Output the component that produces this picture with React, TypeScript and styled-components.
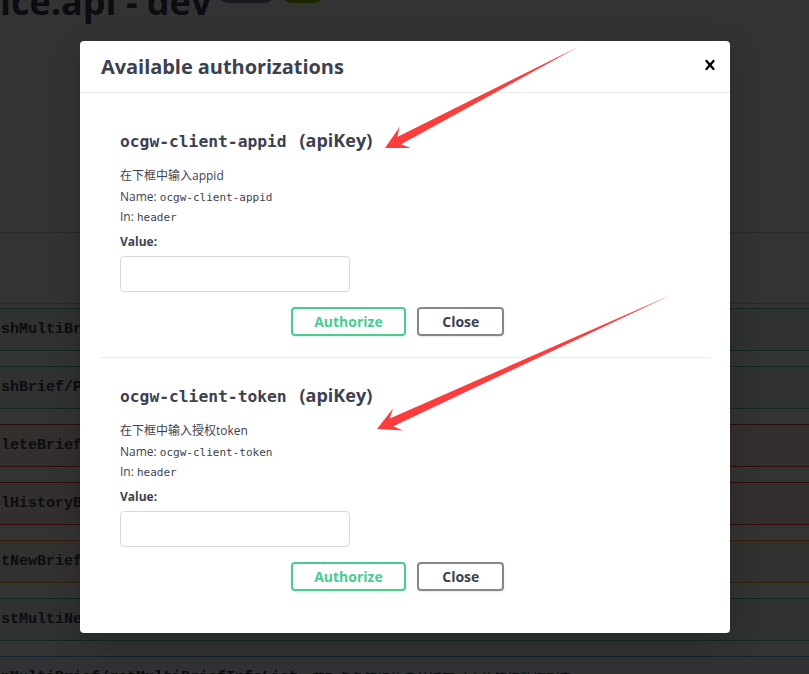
import styled, { createGlobalStyle } from "styled-components";

const GlobalStyle = createGlobalStyle`
  html, body {
    margin: 0;
    padding: 0;
    background: #fff;
  }
  body {
    font-family: "Open Sans", "Noto Sans CJK SC", sans-serif;
  }
  * {
    box-sizing: border-box;
  }
`;

type Tone = "post" | "delete" | "put" | "get";

const toneColors: Record<Tone, { border: string; bg: string }> = {
  post: { border: "#49cc90", bg: "rgba(73,204,144,.1)" },
  delete: { border: "#f93e3e", bg: "rgba(249,62,62,.1)" },
  put: { border: "#fca130", bg: "rgba(252,161,48,.1)" },
  get: { border: "#61affe", bg: "rgba(97,175,254,.1)" },
};

const ops: { path: string; tone: Tone; summary?: string }[] = [
  { path: "shMultiBrief/pushMultiBriefInfo", tone: "post" },
  { path: "shBrief/PushBriefInfo", tone: "post" },
  { path: "leteBrief/deleteBriefInfo", tone: "delete" },
  { path: "lHistoryBrief/delAllHistoryBrief", tone: "delete" },
  { path: "tNewBrief/putNewBriefInfo", tone: "put" },
  { path: "stMultiNews/postMultiNewsInfo", tone: "post" },
  {
    path: "nMultiBrief/getMultiBriefInfoList",
    tone: "get",
    summary: "获取多条简报信息并返回对应的简报数据列表",
  },
];

const auths = [
  { name: "ocgw-client-appid", desc: "在下框中输入appid" },
  { name: "ocgw-client-token", desc: "在下框中输入授权token" },
];

// arrow polygon: thin tail, notched head
const arrowPoints = (tx: number, ty: number, px: number, py: number) => {
  const dx = px - tx;
  const dy = py - ty;
  const len = Math.hypot(dx, dy);
  const ux = dx / len;
  const uy = dy / len;
  const nx = -uy;
  const ny = ux;
  const L = 23;
  const W = 12;
  const notch = 16;
  const w = 4.2;
  const bx = px - ux * L;
  const by = py - uy * L;
  const cx = px - ux * notch;
  const cy = py - uy * notch;
  const pts = [
    [tx, ty],
    [cx + nx * w, cy + ny * w],
    [bx + nx * W, by + ny * W],
    [px, py],
    [bx - nx * W, by - ny * W],
    [cx - nx * w, cy - ny * w],
  ];
  return pts.map((p) => p.map((v) => v.toFixed(1)).join(",")).join(" ");
};

const App = () => {
  return (
    <Screen>
      <GlobalStyle />
      <Page>
        <InfoTitle>
          ice.api - dev
          <Badge $color="#7d8492" $w={55}>1.0.0</Badge>
          <Badge $color="#89bf04" $w={42}>OAS3</Badge>
        </InfoTitle>
        <SchemeArea />
        <TagHeader />
        <OpList>
          {ops.map((op) => (
            <OpRow key={op.path} $tone={op.tone}>
              <OpPath>{op.path}</OpPath>
              {op.summary && <OpSummary>{op.summary}</OpSummary>}
            </OpRow>
          ))}
        </OpList>
      </Page>

      <Backdrop>
        <Modal>
          <ModalHeader>
            <ModalTitle>Available authorizations</ModalTitle>
            <CloseModal aria-label="close">
              <svg width="20" height="20" viewBox="0 0 20 20">
                <path
                  fill="#000"
                  d="M14.348 14.849c-.469.469-1.229.469-1.697 0L10 11.819l-2.651 3.029c-.469.469-1.229.469-1.697 0-.469-.469-.469-1.229 0-1.697l2.758-3.15-2.759-3.152c-.469-.469-.469-1.228 0-1.697.469-.469 1.228-.469 1.697 0L10 8.183l2.651-3.031c.469-.469 1.228-.469 1.697 0 .469.469.469 1.229 0 1.697l-2.758 3.152 2.758 3.15c.469.469.469 1.229 0 1.698z"
                />
              </svg>
            </CloseModal>
          </ModalHeader>
          <ModalContent>
            {auths.map((a, i) => (
              <AuthContainer key={a.name} $last={i === auths.length - 1}>
                <AuthTitle>
                  <code>{a.name} </code>(apiKey)
                </AuthTitle>
                <Desc>{a.desc}</Desc>
                <InfoLine>
                  Name: <code>{a.name}</code>
                </InfoLine>
                <InfoLine>
                  In: <code>header</code>
                </InfoLine>
                <ValueLabel>Value:</ValueLabel>
                <ValueInput type="text" />
                <BtnRow>
                  <ModalBtn $color="#49cc90" $text="#49cc90" $pad={21.5}>
                    Authorize
                  </ModalBtn>
                  <ModalBtn $color="#888" $text="#3b4151" $pad={23}>
                    Close
                  </ModalBtn>
                </BtnRow>
              </AuthContainer>
            ))}
          </ModalContent>
        </Modal>
      </Backdrop>

      <Annotations width="809" height="674" viewBox="0 0 809 674">
        <polygon fill="#fd3d3d" points={arrowPoints(578, 47, 385, 148)} />
        <polygon fill="#fd3d3d" points={arrowPoints(671, 295, 377, 429)} />
      </Annotations>
    </Screen>
  );
};

const Screen = styled.div`
  position: relative;
  width: 809px;
  height: 674px;
  overflow: hidden;
`;

const Page = styled.div`
  background: #fff;
  height: 674px;
`;

const InfoTitle = styled.h2`
  margin: -16px 0 0 0;
  padding-left: 0;
  font: 700 36px/36px "Open Sans", sans-serif;
  color: #3b4151;
  white-space: nowrap;
`;

const Badge = styled.small<{ $color: string; $w: number }>`
  display: inline-block;
  vertical-align: top;
  width: ${(p) => p.$w}px;
  margin-left: 8px;
  height: 19px;
  border-radius: 57px;
  background: ${(p) => p.$color};
  color: #fff;
  text-align: center;
  font: 700 10px/19px "Open Sans", sans-serif;
`;

const SchemeArea = styled.div`
  height: 213px;
  border-bottom: 1px solid rgba(59, 65, 81, 0.3);
`;

const TagHeader = styled.div`
  height: 71px;
  border-bottom: 1px solid rgba(59, 65, 81, 0.3);
`;

const OpList = styled.div`
  padding-top: 4px;
`;

const OpRow = styled.div<{ $tone: Tone }>`
  display: flex;
  align-items: center;
  height: 43px;
  margin: 0 -10px 15px;
  padding-left: 10px;
  border: 1px solid ${(p) => toneColors[p.$tone].border};
  border-radius: 4px;
  background: ${(p) => toneColors[p.$tone].bg};
  white-space: nowrap;
`;

const OpPath = styled.span`
  font: 700 15px "Liberation Mono", monospace;
  color: #3b4151;
`;

const OpSummary = styled.span`
  margin-left: 14px;
  font: 13px "Noto Sans CJK SC", sans-serif;
  color: #3b4151;
`;

const Backdrop = styled.div`
  position: absolute;
  inset: 0;
  background: rgba(0, 0, 0, 0.8);
  padding: 41px 0 0 80px;
`;

const Modal = styled.div`
  width: 650px;
  height: 592px;
  background: #fff;
  border-radius: 4px;
  box-shadow: 0 10px 30px 0 rgba(0, 0, 0, 0.2);
  display: flex;
  flex-direction: column;
`;

const ModalHeader = styled.div`
  height: 52px;
  flex-shrink: 0;
  display: flex;
  align-items: center;
  justify-content: space-between;
  padding: 0 10px 0 21px;
  border-bottom: 1px solid #ebebeb;
`;

const ModalTitle = styled.h3`
  margin: 0;
  font: 700 20px "Open Sans", sans-serif;
  letter-spacing: -0.05px;
  color: #3b4151;
`;

const CloseModal = styled.button`
  display: flex;
  padding: 0;
  margin-top: -3px;
  background: none;
  border: none;
`;

const ModalContent = styled.div`
  padding: 10px 20px 0;
`;

const AuthContainer = styled.div<{ $last?: boolean }>`
  padding: 26px 20px 21px;
  border-bottom: ${(p) => (p.$last ? "none" : "1px solid #ebebeb")};
  color: #3b4151;
  code {
    font-family: "DejaVu Sans Mono", monospace;
    line-height: 1;
  }
`;

const AuthTitle = styled.h4`
  margin: -1px 0 0;
  height: 24px;
  overflow: visible;
  white-space: nowrap;
  font: 700 18px/24px "Open Sans", sans-serif;
  code {
    font-size: 16.3px;
    font-weight: 700;
    margin-right: 3px;
  }
`;

const Desc = styled.p`
  margin: 14px 0 1px;
  height: 20px;
  font: 12px/20px "Open Sans", "Noto Sans CJK SC", sans-serif;
`;

const InfoLine = styled.p`
  margin: 0;
  height: 20px;
  font: 12px/20px "Open Sans", sans-serif;
  code {
    font-size: 11px;
  }
`;

const ValueLabel = styled.label`
  display: block;
  height: 20px;
  margin: 5px 0 4px;
  font: 700 12px/20px "Open Sans", sans-serif;
`;

const ValueInput = styled.input`
  display: block;
  width: 230px;
  height: 36px;
  padding: 8px 10px;
  border: 1px solid #d9d9d9;
  border-radius: 4px;
  background: #fff;
  outline: none;
`;

const BtnRow = styled.div`
  display: flex;
  justify-content: center;
  gap: 11px;
  margin-top: 15px;
  padding-right: 15px;
`;

const ModalBtn = styled.button<{ $color: string; $text: string; $pad: number }>`
  height: 29px;
  padding: 0 ${(p) => p.$pad}px;
  border: 2px solid ${(p) => p.$color};
  border-radius: 4px;
  background: transparent;
  color: ${(p) => p.$text};
  font: 700 14px "Open Sans", sans-serif;
  box-shadow: 0 1px 2px rgba(0, 0, 0, 0.1);
`;

const Annotations = styled.svg`
  position: absolute;
  left: 0;
  top: 0;
  pointer-events: none;
`;

export default App;
